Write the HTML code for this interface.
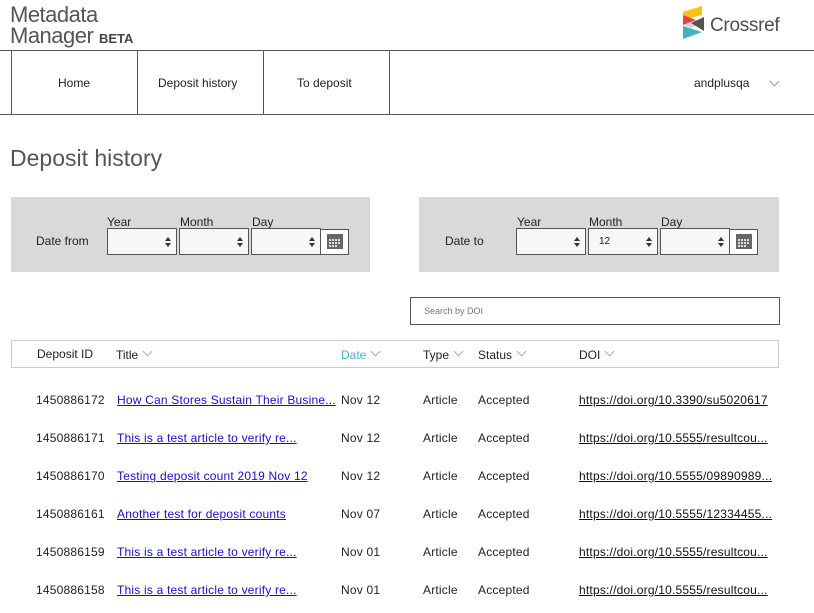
<!DOCTYPE html>
<html><head><meta charset="utf-8"><style>
*{box-sizing:border-box;margin:0;padding:0}
body{width:814px;height:613px;overflow:hidden;background:#fff;font-family:"Liberation Sans",Arial,sans-serif;color:#222;position:relative}
.abs{position:absolute}
.t{font-size:12px;color:#222}
.sel{position:absolute;height:27px;border:1px solid #555;background:#f7f7f7;font-size:10px;padding:7px 10px}
.sel:after{content:"";position:absolute;right:5px;top:8px;width:0;height:0;border-left:3px solid transparent;border-right:3px solid transparent;border-bottom:4px solid #333}
.sel:before{content:"";position:absolute;right:5px;top:14px;width:0;height:0;border-left:3px solid transparent;border-right:3px solid transparent;border-top:4px solid #333}
.cal{position:absolute;width:29px;height:26px;border:1px solid #555;background:#fff}
.chev{display:inline-block;width:7px;height:7px;border-right:1px solid #aaa;border-bottom:1px solid #aaa;transform:rotate(45deg);margin-left:6px;position:relative;top:-4px}
a{color:#1a0dcc}
.row{position:absolute;left:0;width:814px;font-size:12px;letter-spacing:0.2px}
.row span{position:absolute}
.row .d{color:#111;text-decoration:underline}
</style></head><body>
<div class="abs" style="left:10px;top:4px;font-size:22px;line-height:21px;color:#555;letter-spacing:-0.5px">Metadata<br>Manager <span style="font-size:13px;font-weight:bold;color:#444;letter-spacing:0">BETA</span></div>
<svg class="abs" style="left:682px;top:6px" width="24" height="34" viewBox="0 0 24 34">
<polygon points="1,6 20,0 20,9 1,14" fill="#f9c20d"/>
<polygon points="1,9 14,14 1,19" fill="#ea3d4b"/>
<polygon points="1,19 14,14 22,17 9,22" fill="#d9d4cc"/>
<polygon points="9,17 22,11 22,25" fill="#545353"/>
<polygon points="1,20 20,26 1,33" fill="#3eb1c8"/>
</svg>
<div class="abs" style="left:710px;top:15px;font-size:19px;color:#4d4d4d;letter-spacing:-0.3px">Crossref</div>
<div class="abs" style="left:0;top:50px;width:814px;height:1px;background:#555"></div>
<div class="abs" style="left:0;top:114px;width:814px;height:1px;background:#555"></div>
<div class="abs" style="left:11px;top:50px;width:1px;height:65px;background:#555"></div>
<div class="abs" style="left:137px;top:50px;width:1px;height:65px;background:#555"></div>
<div class="abs" style="left:263px;top:50px;width:1px;height:65px;background:#555"></div>
<div class="abs" style="left:389px;top:50px;width:1px;height:65px;background:#555"></div>
<div class="abs t" style="left:58px;top:76px">Home</div>
<div class="abs t" style="left:158px;top:76px">Deposit history</div>
<div class="abs t" style="left:297px;top:76px">To deposit</div>
<div class="abs t" style="left:694px;top:76px">andplusqa</div>
<div class="abs" style="left:765px;top:76px"><span class="chev" style="border-color:#999"></span></div>
<div class="abs" style="left:10px;top:145px;font-size:23px;color:#555">Deposit history</div>

<div class="abs" style="left:11px;top:197px;width:359px;height:75px;background:#d9d9d9"></div>
<div class="abs t" style="left:36px;top:234px">Date from</div>
<div class="abs t" style="left:107px;top:215px">Year</div>
<div class="abs t" style="left:180px;top:215px">Month</div>
<div class="abs t" style="left:252px;top:215px">Day</div>
<div class="sel" style="left:107px;top:228px;width:70px"></div>
<div class="sel" style="left:179px;top:228px;width:70px"></div>
<div class="sel" style="left:251px;top:228px;width:70px"></div>
<div class="cal" style="left:320px;top:229px"><svg width="27" height="24"><rect x="6" y="4" width="16" height="15" fill="#666"/><g fill="#ddd"><rect x="8" y="9" width="2" height="2"/><rect x="11" y="9" width="2" height="2"/><rect x="14" y="9" width="2" height="2"/><rect x="17" y="9" width="2" height="2"/><rect x="8" y="12" width="2" height="2"/><rect x="11" y="12" width="2" height="2"/><rect x="14" y="12" width="2" height="2"/><rect x="17" y="12" width="2" height="2"/><rect x="8" y="15" width="2" height="2"/><rect x="11" y="15" width="2" height="2"/><rect x="14" y="15" width="2" height="2"/></g></svg></div>

<div class="abs" style="left:419px;top:197px;width:360px;height:75px;background:#d9d9d9"></div>
<div class="abs t" style="left:445px;top:234px">Date to</div>
<div class="abs t" style="left:517px;top:215px">Year</div>
<div class="abs t" style="left:589px;top:215px">Month</div>
<div class="abs t" style="left:661px;top:215px">Day</div>
<div class="sel" style="left:516px;top:228px;width:70px"></div>
<div class="sel" style="left:588px;top:228px;width:70px">12</div>
<div class="sel" style="left:660px;top:228px;width:70px"></div>
<div class="cal" style="left:729px;top:229px"><svg width="27" height="24"><rect x="6" y="4" width="16" height="15" fill="#666"/><g fill="#ddd"><rect x="8" y="9" width="2" height="2"/><rect x="11" y="9" width="2" height="2"/><rect x="14" y="9" width="2" height="2"/><rect x="17" y="9" width="2" height="2"/><rect x="8" y="12" width="2" height="2"/><rect x="11" y="12" width="2" height="2"/><rect x="14" y="12" width="2" height="2"/><rect x="17" y="12" width="2" height="2"/><rect x="8" y="15" width="2" height="2"/><rect x="11" y="15" width="2" height="2"/><rect x="14" y="15" width="2" height="2"/></g></svg></div>

<div class="abs" style="left:410px;top:297px;width:370px;height:28px;border:1px solid #555;font-size:9px;color:#777;padding:8px 13px">Search by DOI</div>

<div class="abs" style="left:11px;top:340px;width:768px;height:28px;border:1px solid #ccc"></div>
<div class="abs t" style="left:37px;top:347px">Deposit ID</div>
<div class="abs t" style="left:116px;top:348px">Title<span class="chev"></span></div>
<div class="abs t" style="left:341px;top:348px;color:#4cb3d0">Date<span class="chev"></span></div>
<div class="abs t" style="left:423px;top:348px">Type<span class="chev"></span></div>
<div class="abs t" style="left:478px;top:348px">Status<span class="chev"></span></div>
<div class="abs t" style="left:579px;top:348px">DOI<span class="chev"></span></div>

<div class="row" style="top:393px"><span style="left:36px">1450886172</span><span style="left:117px"><a href="#">How Can Stores Sustain Their Busine...</a></span><span style="left:341px">Nov 12</span><span style="left:423px">Article</span><span style="left:478px">Accepted</span><span class="d" style="left:579px">https://doi.org/10.3390/su5020617</span></div>
<div class="row" style="top:431px"><span style="left:36px">1450886171</span><span style="left:117px"><a href="#">This is a test article to verify re...</a></span><span style="left:341px">Nov 12</span><span style="left:423px">Article</span><span style="left:478px">Accepted</span><span class="d" style="left:579px">https://doi.org/10.5555/resultcou...</span></div>
<div class="row" style="top:469px"><span style="left:36px">1450886170</span><span style="left:117px"><a href="#">Testing deposit count 2019 Nov 12</a></span><span style="left:341px">Nov 12</span><span style="left:423px">Article</span><span style="left:478px">Accepted</span><span class="d" style="left:579px">https://doi.org/10.5555/09890989...</span></div>
<div class="row" style="top:507px"><span style="left:36px">1450886161</span><span style="left:117px"><a href="#">Another test for deposit counts</a></span><span style="left:341px">Nov 07</span><span style="left:423px">Article</span><span style="left:478px">Accepted</span><span class="d" style="left:579px">https://doi.org/10.5555/12334455...</span></div>
<div class="row" style="top:545px"><span style="left:36px">1450886159</span><span style="left:117px"><a href="#">This is a test article to verify re...</a></span><span style="left:341px">Nov 01</span><span style="left:423px">Article</span><span style="left:478px">Accepted</span><span class="d" style="left:579px">https://doi.org/10.5555/resultcou...</span></div>
<div class="row" style="top:583px"><span style="left:36px">1450886158</span><span style="left:117px"><a href="#">This is a test article to verify re...</a></span><span style="left:341px">Nov 01</span><span style="left:423px">Article</span><span style="left:478px">Accepted</span><span class="d" style="left:579px">https://doi.org/10.5555/resultcou...</span></div>
</body></html>
